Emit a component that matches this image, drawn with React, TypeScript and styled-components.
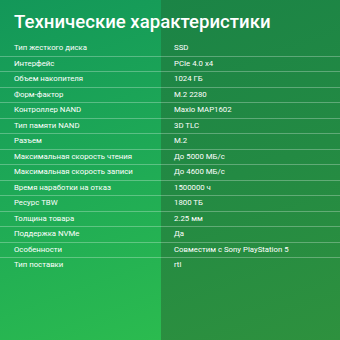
import React from 'react';
import styled, { createGlobalStyle } from 'styled-components';

const GlobalStyle = createGlobalStyle`
  html, body {
    margin: 0;
    padding: 0;
  }
  body {
    font-family: Roboto, "Liberation Sans", sans-serif;
  }
`;

const Page = styled.div`
  position: relative;
  width: 340px;
  height: 340px;
  overflow: hidden;
  display: grid;
  grid-template-columns: 161px 1fr;
`;

const LeftPanel = styled.div`
  background: linear-gradient(160deg, #139759 0%, #1ea956 50%, #2bbb4f 100%);
`;

const RightPanel = styled.div`
  background: linear-gradient(160deg, #1b8446 0%, #238a43 50%, #2e913e 100%);
`;

// content sits over both colour halves
const Content = styled.div`
  position: absolute;
  inset: 0;
  color: #fff;
`;

const Title = styled.h1`
  margin: 0;
  padding: 10px 0 0 14px;
  font-size: 18.6px;
  line-height: 24px;
  font-weight: 500;
`;

const Table = styled.div`
  margin-top: 6px;
  display: flex;
  flex-direction: column;
`;

const Row = styled.div<{ $first?: boolean }>`
  display: grid;
  grid-template-columns: 174px 1fr;
  height: 15.5px;
  box-sizing: border-box;
  border-top: 1px solid ${p => (p.$first ? 'transparent' : 'rgba(255, 255, 255, 0.28)')};
  font-size: 7.8px;
  line-height: 14.5px;
  align-items: center;
`;

const Label = styled.div`
  padding-left: 14px;
  white-space: nowrap;
`;

const Value = styled.div`
  white-space: nowrap;
`;

const specs: [string, string][] = [
  ['Тип жесткого диска', 'SSD'],
  ['Интерфейс', 'PCIe 4.0 x4'],
  ['Объем накопителя', '1024 ГБ'],
  ['Форм-фактор', 'M.2 2280'],
  ['Контроллер NAND', 'Maxio MAP1602'],
  ['Тип памяти NAND', '3D TLC'],
  ['Разъем', 'M.2'],
  ['Максимальная скорость чтения', 'До 5000 МБ/с'],
  ['Максимальная скорость записи', 'До 4600 МБ/с'],
  ['Время наработки на отказ', '1500000 ч'],
  ['Ресурс TBW', '1800 ТБ'],
  ['Толщина товара', '2.25 мм'],
  ['Поддержка NVMe', 'Да'],
  ['Особенности', 'Совместим с Sony PlayStation 5'],
  ['Тип поставки', 'rtl'],
];

export default function App() {
  return (
    <>
      <GlobalStyle />
      <Page>
        <LeftPanel />
        <RightPanel />
        <Content>
          <Title>Технические характеристики</Title>
          <Table>
            {specs.map(([label, value], i) => (
              <Row key={label} $first={i === 0}>
                <Label>{label}</Label>
                <Value>{value}</Value>
              </Row>
            ))}
          </Table>
        </Content>
      </Page>
    </>
  );
}
